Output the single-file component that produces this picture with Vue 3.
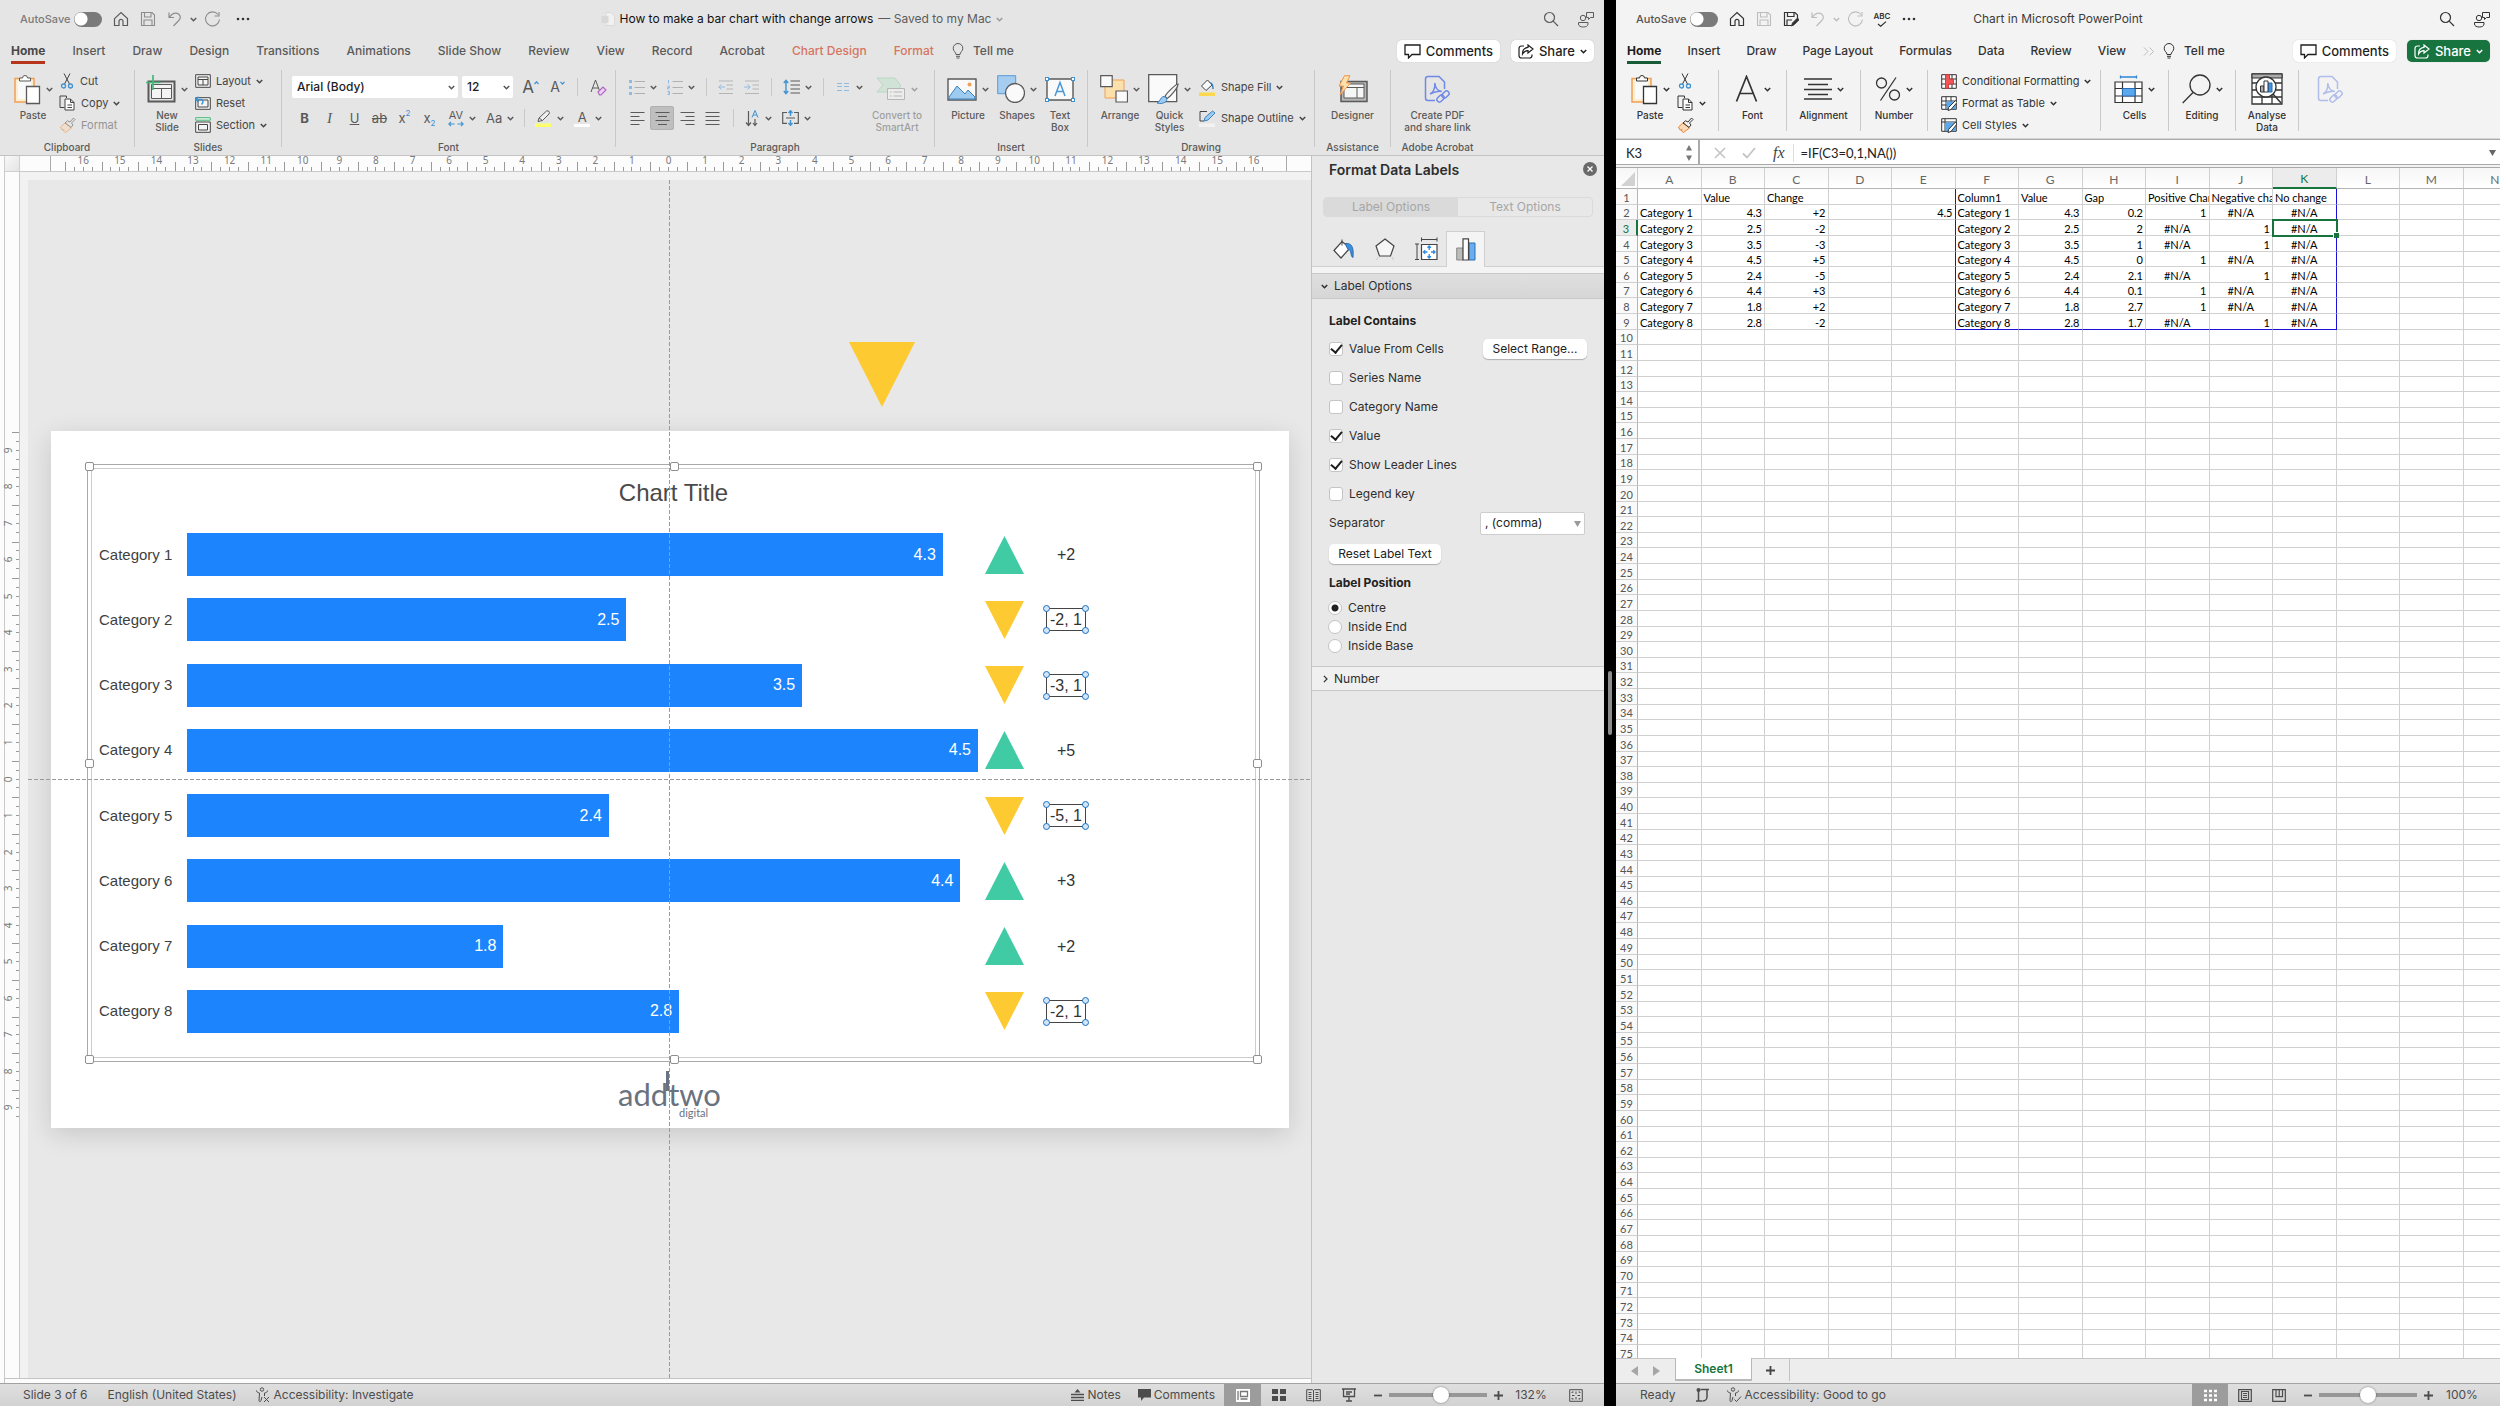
<script setup>
import { h, ref } from 'vue'

const icons = {
  chev: [7, 5, '<path d="M.8.9 3.5 3.7 6.2.9" stroke-width="1.5"/>'],
  chevR: [5, 8, '<path d="M.9.9 4 4 .9 7.1" stroke-width="1.2"/>'],
  home: [16, 16, '<path d="M1.500 7.600 8 1.500l6.500 6.100V14.500H10V10.400a2 2 0 0 0-4 0V14.500H1.500Z" stroke-width="1.2"/>'],
  save: [16, 16, '<path d="M1.500 1.500H12L14.500 4V14.500H1.500ZM4.500 1.500V6h6.500V1.500M4 14.500V9h8v5.500" stroke-width="1.1"/>'],
  saveAs: [16, 16, '<path d="M8 14.500H1.500V1.500H12L14.500 4V7M4.500 1.500V5.500H11V1.500M4 14.500V9h5" stroke-width="1.2"/><path d="m8.500 15 1-3 5-5 1.500 1.800-5 5Z" fill="currentColor"/>'],
  undo: [16, 16, '<path d="M2 1.500V6.500H7M2.300 6.300C5 2.500 9 .8 11.800 3.200c2.500 2.400 1.800 4.600-.5 6.800L6.500 15" stroke-width="1.200"/>'],
  redo: [17, 17, '<path d="M14 3.500A7 7 0 1 0 15.500 8.500M15 1V5h-4.500" stroke-width="1.100"/>'],
  dots: [14, 4, '<g fill="currentColor" stroke="none"><circle cx="2" cy="2" r="1.300"/><circle cx="7" cy="2" r="1.300"/><circle cx="12" cy="2" r="1.300"/></g>'],
  check: [10, 6, '<path d="M1 3 3.700 5.300 9 .6" stroke-width="1.200"/>'],
  ppt: [14, 14, '<path d="M5 .5h5L13.500 4v9.500H5Z" fill="#f1f1f1" stroke="#dadada"/><rect x=".5" y="4" width="7" height="7" fill="#d8d8d8" stroke="none"/>'],
  search: [16, 16, '<circle cx="6.500" cy="6.500" r="5" stroke-width="1.200"/><path d="m10.200 10.200 4.800 4.800" stroke-width="1.200"/>'],
  people: [17, 17, '<circle cx="6" cy="7" r="2.700"/><path d="M1.500 11.500h9.500v1.500c0 2-2 3-4.700 3s-4.800-1-4.800-3ZM9.500 1.500h7v5h-3l-2 2v-2h-2Z"/>'],
  bulb: [12, 16, '<path d="M4 11.500C4 9 1.200 8.500 1.200 5.300a4.800 4.800 0 0 1 9.600 0C10.800 8.500 8 9 8 11.500ZM4 13.300h4M4.500 15h3"/>'],
  comment: [17, 15, '<path d="M1 1h15v9.500H8L4.500 14v-3.500H1Z" stroke-width="1.300"/>'],
  share: [16, 15, '<path d="M6 2H3.500C2 2 1 3 1 4.500v7C1 13 2 14 3.500 14h8c1.500 0 2.500-1 2.500-2.500V10.500" stroke-width="1.200"/><path d="M10 1l5 4-5 4V6.700C7.500 6.700 6 7.500 4.500 10 4.500 6 6.500 3.700 10 3.400Z" stroke-width="1.200"/>'],
  paste: [28, 31, '<path d="M2 4.500h19V28H2Z" fill="#fdeecf" stroke="#f0a055" stroke-width="1.500"/><path d="M5 7h13v18H5Z" fill="#fafafa" stroke="none"/><path d="M6.500 7V4h3a2.500 2.500 0 0 1 5 0h3V7Z" fill="#fff"/><path d="M13.500 12.500h13v17h-13Z" fill="#fff" stroke-width="1.300"/>'],
  cut: [16, 16, '<path d="M5 .5l5.500 10.500M11 .5 5.500 11"/><g stroke="#3f93d2" stroke-width="1.300"><circle cx="4.500" cy="13" r="2"/><circle cx="11.500" cy="13" r="2"/></g>'],
  copy: [17, 16, '<path d="M5.500 12.500H1V1h6.500v2"/><path d="M6 4h5.500L15 7.500V15H6ZM11.500 4v3.500H15M8.500 10H13M8.500 12.500H13" fill="#fff"/>'],
  brush: [17, 16, '<path d="m1.500 10 5-4.500 6 5.500-6 4.500-2-1.500.5-1.500-2 .5Z" fill="#fbd9b5" stroke="#e8893c"/><path d="m6 6 2.500-2.200L11 5l3.500-4L16 2.500 12.500 6l1.500 2-2 2.500Z"/>'],
  newSlide: [30, 28, '<path d="M2.500 6.500h26v20h-26Z" stroke-width="2"/><path d="M5.500 9.500h20v14h-20ZM5.500 13.500h20M15.500 13.500v10" fill="#f4f4f4"/><path d="M7 0v15M0 7.500h14.500" stroke="#45b878" stroke-width="1.700"/>'],
  layout: [16, 14, '<path d="M.7.700h14.600v12.600H.7ZM3 3h10v8H3ZM3 5.500h10M8 5.500V11" fill="#f4f4f4"/>'],
  reset: [16, 14, '<path d="M.7 1.700h14.600v11.600H.7ZM3 4h10v7H3Z" fill="#f4f4f4"/><path d="M1 3.500h5.500c2 0 2 3 0 5M3.500.8.800 3.500l2.700 2.700" stroke="#3f93d2" stroke-width="1.500"/>'],
  section: [16, 16, '<path d="M.7.700h14.600v2.500H.7Z" stroke="#45b878" fill="#e7f6ed"/><path d="M.7 5h14.600v10.300H.7ZM3.500 7.500h9V13h-9Z" fill="#f4f4f4"/>'],
  caretUp: [5, 4, '<path d="M.5 3 2.500.8 4.500 3" stroke="#3f93d2" stroke-width="1.200"/>'],
  caretDn: [5, 4, '<path d="M.5.8 2.500 3 4.500.8" stroke="#3f93d2" stroke-width="1.200"/>'],
  eraser: [17, 17, '<path d="m1 13 4.500-12L10 13M2.500 9h6"/><path d="m8 13 5-5 3 3-5 5H9.500Z" fill="#ecd3f2" stroke="#b164c4" stroke-width="1.200"/>'],
  av: [16, 6, '<path d="M1 3h5.500M9.500 3H15M3 .8.900 3 3 5.200M13 .8 15.100 3 13 5.200" stroke="#3f93d2" stroke-width="1.200"/>'],
  pen: [17, 17, '<path d="M0 13.500h16v3.500H0Z" fill="#ffff6b" stroke="none"/><path d="m4 8 7.500-7c2.500-.5 3.500 1 2.500 3L7.500 10.500ZM4 8l-1 3.500 4.500-1" fill="#efefef"/>'],
  bullets: [16, 15, '<g stroke="#8fbbe0"><path d="M1.500 0v3M1.500 6v3M1.500 12v3" stroke-width="3"/></g><path d="M5.500 1.500H16M5.500 7.500H16M5.500 13.500H16" stroke="#b0b0b0"/>'],
  numbers: [16, 15, '<path d="M5.500 1.500H16M5.500 7.500H16M5.500 13.500H16" stroke="#b0b0b0"/><path d="M1.500 0v3.500M.5 6h2v1.500h-2v1.500h2M.5 11.500h2v3h-2M1 13h1.500" stroke="#8fbbe0"/>'],
  outdent: [16, 15, '<path d="M1 1h14M8.500 5H15M8.500 9H15M1 13.500h14" stroke="#b5b5b5"/><path d="M.8 7H7M3.500 4.500.8 7l2.700 2.500" stroke="#8fbbe0"/>'],
  indent: [16, 15, '<path d="M1 1h14M8.500 5H15M8.500 9H15M1 13.500h14" stroke="#b5b5b5"/><path d="M0 7h6M3.500 4.500 6.200 7 3.500 9.500" stroke="#8fbbe0"/>'],
  spacing: [17, 16, '<path d="M3 1.500v13M.8 4 3 1.300 5.200 4M.8 12 3 14.700 5.200 12" stroke="#3f93d2" stroke-width="1.400"/><path d="M7.500 2H17M7.500 6H17M7.500 10H17M7.500 14H17" stroke-width="1.200"/>'],
  columns: [16, 10, '<path d="M2 1.500h5M2 4.500h5M2 8.500h5M9 1.500h5M9 4.500h5M9 8.500h5" stroke="#8fbbe0"/>'],
  smart: [30, 24, '<path d="M1 1h18l6 8-6 6H1l6-7Z" fill="#bfe3c9" stroke="#93cca3"/><path d="M11.500 11.500h17v11h-17ZM14 15h1.500M17.500 15H26M14 19h1.500M17.500 19H26" fill="#f4f4f4" stroke="#888"/>'],
  left: [15, 15, '<path d="M.5 1.500h14M.5 5.500h9M.5 9.500h14M.5 13.500h9"/>'],
  center: [15, 15, '<path d="M.5 1.500h14M3 5.500h9M.5 9.500h14M3 13.500h9"/>'],
  right: [15, 15, '<path d="M.5 1.500h14M5.500 5.500h9M.5 9.500h14M5.500 13.500h9"/>'],
  justify: [15, 15, '<path d="M.5 1.500h14M.5 5.500h14M.5 9.500h14M.5 13.500h14"/>'],
  textDir: [16, 17, '<path d="M4.500 1v14M2 12.500 4.500 15.500 7 12.500M11 9v6M9 13l2 2.500 2-2.500" stroke-width="1.200"/><path d="m8 7.500 3-7 3 7M9 5h4" stroke="#3f93d2"/>'],
  alignText: [17, 16, '<path d="M5 2.500H.7v10.800H5M12 2.500h4.300v10.800H12M4 8h9" stroke-width="1.200"/><path d="M8.500 1v5M8.500 10v5M6.500 3l2-2.300 2 2.300M6.500 13l2 2.300 2-2.300" stroke="#3f93d2" stroke-width="1.400"/>'],
  picture: [30, 23, '<path d="M1 1h28v21H1Z" fill="#fafafa" stroke-width="1.400"/><path d="m2 19 8-11 8 8 3-4 7 7v2H2Z" fill="#9ecbf0" stroke="#3b83bf"/><circle cx="22.500" cy="6.500" r="2" fill="#f0a055" stroke="none"/>'],
  shapes: [28, 28, '<path d="M.7.700h18v18h-18Z" fill="#a4cdf0" stroke="#5a9bd4"/><circle cx="18" cy="18" r="9.500" fill="#fafafa" stroke-width="1.300"/>'],
  textBox: [30, 25, '<path d="M2 2h26v21H2Z" fill="#fafafa" stroke-width="1.400"/><path d="m10 19 5-13.500L20 19M11.800 14.500h6.500" stroke="#4a98d8" stroke-width="1.500"/><g fill="#fff" stroke="#3f93d2"><rect x=".5" y=".5" width="3" height="3"/><rect x="26.500" y=".5" width="3" height="3"/><rect x=".5" y="21.500" width="3" height="3"/><rect x="26.500" y="21.500" width="3" height="3"/></g>'],
  arrange: [28, 28, '<path d="M5 5h19v18H5Z" fill="#fbe0ac" stroke="#f0a055"/><path d="M.7.700h11.500v11H.7ZM16 16h11.500v11H16Z" fill="#fafafa" stroke-width="1.200"/>'],
  quick: [31, 30, '<path d="M.7.700h28v27H.7Z" fill="#fafafa" stroke-width="1.300"/><path d="M30 10c-2 0-12 9.500-13 12.500l2 2C22 23 30 14 30 10Z" fill="#f6f6f6" stroke-width="1.200"/><path d="M9 29c3-1 3-5 6-6.500 3 0 5 3 3 5s-6 2.500-9 1.500Z" fill="#9ecbf0" stroke="#3b83bf"/>'],
  fill: [17, 17, '<path d="M0 13.500h16v3.500H0Z" fill="#fcd84f" stroke="none"/><path d="m2.500 7 6-6L13 6l-6 5.500Z" fill="#f8f8f8"/><path d="M11 4c3 0 3 3 3 6" stroke="#3b83bf" stroke-width="1.500"/>'],
  outline: [17, 17, '<path d="M0 13.500h16v3.500H0Z" fill="#f2f2f2" stroke="none"/><path d="M8 1.500H1V11h4"/><path d="m5 11 1-3.500L13.500 1l2.500 2-7 7Z" fill="#9ecbf0" stroke="#3b83bf"/>'],
  designer: [31, 28, '<path d="M4 6.500h26v20H4Z" fill="#b5b5b5" stroke-width="1.500"/><path d="M7 9h20v14H7ZM7 12.500h20M20 12.500V23" fill="#f6f6f6"/><path d="M7.500.7 2 11h4.500L3 20 13.500 8H9.500L13 .7Z" fill="#fbe0ac" stroke="#f0954a"/>'],
  pdf: [27, 29, '<path d="M11 25.500H4C2.500 25.500 1.500 24.500 1.500 23V4C1.500 2.500 2.500 1.500 4 1.500h11l5.500 5.500v7M6 19c4-2 5-7 4.800-11 .5 5 3 8 7 8.500-4-.5-8 .5-11.800 2.500" stroke="#7089e8" stroke-width="1.500"/><g stroke="#7089e8" stroke-width="1.500"><rect x="12.500" y="21" width="8" height="5" rx="2.500" transform="rotate(-45 16.500 23.500)"/><rect x="17.500" y="17" width="8" height="5" rx="2.500" transform="rotate(-45 21.500 19.500)"/></g>'],
  bucket: [24, 24, '<path d="M2 13.500 10 4.500l8 6.500-9 10Z" fill="#fff" stroke-width="1.200"/><path d="M10 8.500V2.500"/><path d="M13 6.500c6-.5 9 2 8 14-3-1-1-8-5-8Z" fill="#3f8edb" stroke="#2d6fb4"/>'],
  pentagon: [22, 24, '<path d="M11 2 20 9l-3.500 10h-11L2 9Z" fill="#f6f6f6" stroke-width="1.200"/><path d="m4 20-1.500 3M18 20l1.500 3" stroke="#c9c9c9"/>'],
  size: [24, 24, '<path d="M7.500 7.500h15.500v15H7.500Z" fill="#fff" stroke-width="1.200"/><path d="M7.500 2.500H23M7.500.5v4M23 .5v4M3 7v15.500M1 7h4M1 22.500h4"/><g stroke="#2f8ce0" stroke-width="1.300"><path d="M15.200 9v4M15.200 17v4M9.500 15h4M17 15h4M13.500 10.700 15.200 9l1.700 1.700M13.500 19.300 15.200 21l1.700-1.700M11.200 13.300 9.500 15l1.700 1.700M19.300 13.300 21 15l-1.700 1.700"/></g>'],
  bars: [20, 23, '<path d="M.7 10h6.500v12H.7Z" fill="#bcbcb8" stroke="#8a8a8a"/><path d="M13 5h6v17h-6Z" fill="#69aef0" stroke="#2d6fb4"/><path d="M7 .8h5.500V22H7Z" fill="#fff" stroke-width="1.200"/>'],
  close: [14, 14, '<circle cx="7" cy="7" r="7" fill="#696969" stroke="none"/><path d="m4.500 4.500 5 5M9.500 4.500l-5 5" stroke="#fff" stroke-width="1.300"/>'],
  access: [16, 16, '<circle cx="7" cy="2.500" r="1.700"/><path d="M1.500 3.500c0 1.500 1 2 3 2.500L4 13.500c0 1.500 1.500 1.500 2 0L7 10M12.500 3.500c0 1.500-1 2-3 2.500v3M9 10l5 5M14 10l-5 5"/>'],
  accessOk: [16, 16, '<circle cx="7" cy="2.500" r="1.700"/><path d="M1.500 3.500c0 1.500 1 2 3 2.500L4 13.500c0 1.500 1.500 1.500 2 0L7 10M12.500 3.500c0 1.500-1 2-3 2.500v3M8.500 12.500l2 2 4.500-5"/>'],
  notes: [13, 12, '<path d="M0 5.500h13M0 8.500h13M0 11.500h13" stroke-width="1.300"/><path d="m3.500 3.500 3-3.500 3 3.500Z" fill="currentColor" stroke="none"/>'],
  talk: [13, 12, '<path d="M0 0h13v8.500H6L3 12V8.500H0Z" fill="currentColor" stroke="none"/>'],
  normal: [14, 13, '<path d="M0 0h14v13H0Z" fill="#fff" stroke="none"/><path d="M4.500 2.500h7v5h-7ZM4.500 10h7M2 2v9" stroke="#777" stroke-width="1.300"/>'],
  sorter: [14, 12, '<path d="M0 0h6v5H0ZM8 0h6v5H8ZM0 7h6v5H0ZM8 7h6v5H8Z" fill="currentColor" stroke="none"/>'],
  reading: [15, 13, '<path d="M7.500 1.500v11M.7.700h5.800l1 1 1-1h5.800v11H8.500l-1 1-1-1H.7ZM2.500 3.500h3M2.500 5.500h3M2.500 7.500h3M2.500 9.500h3M9.500 3.500h3M9.500 5.500h3M9.500 7.500h3M9.500 9.500h3"/>'],
  show: [14, 14, '<path d="M0 1h14M1.500 1v7.500h11V1M4 4h6M4 6h4M7 9v3.500M4 13h6" stroke-width="1.300"/>'],
  fit: [14, 13, '<path d="M.7.700h12.600v11.600H.7ZM7 2.500v2.500M7 8v2.500M3 6.500h2.500M8.500 6.500H11M3 4V3h1.500M9.500 3H11v1M3 9v1h1.500M9.500 10H11V9"/>'],
  grid: [13, 13, '<g stroke="#fff" stroke-width="2.500"><path d="M0 2h3M5 2h3M10 2h3M0 6.500h3M5 6.500h3M10 6.500h3M0 11h3M5 11h3M10 11h3"/></g>'],
  page: [14, 13, '<path d="M.7.700h12.600v11.600H.7ZM3.500 2.500h7v8h-7ZM5 4.500h4M5 6.500h4M5 8.500h4" stroke-width="1.200"/>'],
  breaks: [14, 13, '<path d="M.7.700h12.600v11.600H.7ZM4 .7v7h6.500v-7M7.200.7v7" stroke-width="1.200"/>'],
  macro: [15, 14, '<path d="M3.500 3v9.500M1 13h6M5.500 1.500H14M12 1.500V9c0 3-3 4-4.500 4" stroke-width="1.500"/><circle cx="3.500" cy="2" r="2" fill="currentColor" stroke="none"/>'],
  bigA: [24, 28, '<path d="m1.500 26.500 10-25 10 25M5 18.500h13.500" stroke-width="1.700"/>'],
  bigAlign: [28, 24, '<path d="M0 2h28M4 7.500h20M0 12.500h28M4 17.500h20M0 22h28" stroke-width="1.300"/>'],
  percent: [26, 26, '<circle cx="6.500" cy="7" r="5" stroke-width="1.300"/><circle cx="19.500" cy="19" r="5" stroke-width="1.300"/><path d="M21 1.500 5.500 24.500" stroke-width="1.300"/>'],
  condFmt: [16, 15, '<path d="M.7.700h14.600v13.600H.7ZM.7 5h14.600M.7 10h14.600M5 .7v13.600M11 .7v13.600" fill="#fff"/><path d="M4.500.7h4v4.500h4V10h-5v4.300h-3Z" fill="#f25555" stroke="#d83b3b"/>'],
  fmtTable: [16, 15, '<path d="M.7.700h14.600v12.600H.7ZM.7 5h14.600M5 .7v12.600M10 .7v12.600M.7 9h14.600" fill="#fff"/><path d="M5.500 5.500h9.500v7.500H5.500Z" fill="#5aa9ee" stroke="none"/><path d="m14.500 4.500-7 7-.5 3 3-1 6-7Z" fill="#fff"/>'],
  cellSt: [16, 15, '<path d="M.7.700h14.600v12.600H.7ZM.7 4h14.600M4 .7v12.600" fill="#fff"/><path d="M4.500 4.500h10.500v8.500H4.500Z" fill="#5aa9ee" stroke="none"/><path d="m14.500 4-7 7.500-.5 3 3-1 6-7.500Z" fill="#fff"/>'],
  cells: [29, 29, '<path d="M6.500 2h16M6.500.5v3M22.500.5v3" stroke="#2f86d6" stroke-width="1.300"/><path d="M1 7h27v20.500H1ZM1 13.500h27M1 21h27M8.500 7v20.500M21 7v20.500" fill="#fff" stroke-width="1.200"/><path d="M8.500 13.500H21V21H8.500Z" fill="#5aa9ee" stroke="#2a6db0"/>'],
  lens: [29, 30, '<circle cx="18" cy="11" r="10" stroke-width="1.300"/><path d="M11 18.500.7 29" stroke-width="1.300"/>'],
  analyse: [32, 32, '<path d="M1 1h30v30H1ZM1 10h30M1 17h30M1 24h30M11 6v25M21 6v25" fill="#fff" stroke-width="1.300"/><path d="M1 1h30v4H1Z" fill="#aaa"/><circle cx="15" cy="14" r="10" fill="#fff" stroke-width="1.300"/><path d="M9.500 13h3.500v6H9.500Z" fill="#b0b0b0"/><path d="M17 10h4v9h-4Z" fill="#3f93e0" stroke="#2a6db0"/><path d="M13 8h4v11h-4Z" fill="#fff"/><path d="m22 21 8 9" stroke-width="1.500"/>'],
  updown: [6, 16, '<path d="M0 5.500 3 0l3 5.500ZM0 10.500 3 16l3-5.500Z" fill="#777" stroke="none"/>'],
  xMark: [12, 12, '<path d="m1 1 10 10M11 1 1 11" stroke-width="1.600"/>'],
  tick: [14, 12, '<path d="m1 6.500 4 4L13 1" stroke-width="1.800"/>'],
  down: [7, 6, '<path d="M0 0h7L3.500 6Z" fill="currentColor" stroke="none"/>'],
  triL: [7, 10, '<path d="M7 0v10L0 5Z" fill="currentColor" stroke="none"/>'],
  triR: [7, 10, '<path d="M0 0v10l7-5Z" fill="currentColor" stroke="none"/>'],
  plus: [9, 9, '<path d="M4.500 0v9M0 4.500h9" stroke-width="1.800"/>'],
  minus: [8, 9, '<path d="M0 4.500h8" stroke-width="1.800"/>'],
  more: [12, 9, '<path d="m1 .5 4 4-4 4M6.500.5l4 4-4 4"/>'],
  corner: [14, 14, '<path d="M14 0v14H0Z" fill="#d2d2d2" stroke="none"/>'],
  up: [39, 38, '<path d="M19.500 0 39 38H0Z" fill="#40cba5" stroke="none"/>'],
  dn: [39, 38, '<path d="M0 0h39L19.500 38Z" fill="#fdca31" stroke="none"/>']
}
const Icon = (p) => {
  const [w, ht, inner] = icons[p.n]
  return h('svg', { width: w, height: ht, viewBox: `0 0 ${w} ${ht}`, fill: 'none', stroke: 'currentColor', 'aria-hidden': 'true', innerHTML: inner })
}
Icon.props = ['n']

const tabs = ['Home', 'Insert', 'Draw', 'Design', 'Transitions', 'Animations', 'Slide Show', 'Review', 'View', 'Record', 'Acrobat', 'Chart Design', 'Format']
const xlTabs = ['Home', 'Insert', 'Draw', 'Page Layout', 'Formulas', 'Data', 'Review', 'View']
const hTicks = Array.from({ length: 33 }, (_, i) => Math.abs(i - 16))
const vTicks = Array.from({ length: 19 }, (_, i) => Math.abs(i - 9))

const rows = [
  ['Category 1', 4.3, 2], ['Category 2', 2.5, -2], ['Category 3', 3.5, -3], ['Category 4', 4.5, 5],
  ['Category 5', 2.4, -5], ['Category 6', 4.4, 3], ['Category 7', 1.8, 2], ['Category 8', 2.8, -2]
].map(([name, value, change]) => ({ name, value, change }))
const gaps = ['0.2', '2', '1', '0', '2.1', '0.1', '2.7', '1.7']
const sign = (n) => (n > 0 ? '+' + n : String(n))

const checks = ref([
  { t: 'Value From Cells', on: true }, { t: 'Series Name', on: false }, { t: 'Category Name', on: false },
  { t: 'Value', on: true }, { t: 'Show Leader Lines', on: true }, { t: 'Legend key', on: false }
])
const place = ref('Centre')
const zoomL = ref(54)
const zoomR = ref(50)

const cols = 'ABCDEFGHIJKLMN'.split('')
const head = { B: 'Value', C: 'Change', F: 'Column1', G: 'Value', H: 'Gap', I: 'Positive Change', J: 'Negative change', K: 'No change' }
function cell(c, r) {
  if (r === 1) return head[c] || ''
  const d = rows[r - 2]
  if (!d) return ''
  const up = d.change > 0
  return { A: d.name, B: d.value, C: sign(d.change), E: r === 2 ? '4.5' : '', F: d.name, G: d.value, H: gaps[r - 2], I: up ? '1' : '#N/A', J: up ? '#N/A' : '1', K: '#N/A' }[c] ?? ''
}
function cls(c, r) {
  const v = String(cell(c, r))
  return {
    num: r > 1 && /^[+-]?[\d.]+$/.test(v),
    na: v === '#N/A',
    eEdge: c === 'E' && r < 10,
    kEdge: c === 'K' && r < 10,
    bEdge: r === 9 && c >= 'F' && c <= 'K',
    active: c === 'K' && r === 3
  }
}
</script>

<template>
  <div class="screen">
    <section class="app ppt">
      <header class="titlebar">
        <div class="quick">
          <label class="auto">AutoSave<input type="checkbox" role="switch" class="switch"></label>
          <button aria-label="Home"><Icon n="home" /></button>
          <button aria-label="Save" class="dim"><Icon n="save" /></button>
          <button aria-label="Undo" class="dim"><Icon n="undo" /></button>
          <button aria-label="Undo list" class="tight"><Icon n="chev" /></button>
          <button aria-label="Redo" class="dim"><Icon n="redo" /></button>
          <button aria-label="More" class="dark"><Icon n="dots" /></button>
        </div>
        <div class="doc"><Icon n="ppt" /><b>How to make a bar chart with change arrows</b><span>— Saved to my Mac</span><Icon n="chev" class="pale" /></div>
        <div class="tools-r"><button aria-label="Search"><Icon n="search" /></button><button aria-label="Account"><Icon n="people" /></button></div>
      </header>
      <nav class="tabs">
        <button v-for="t in tabs" :key="t" :class="{ on: t === 'Home', ctx: t === 'Chart Design' || t === 'Format' }">{{ t }}</button>
        <button class="tell"><Icon n="bulb" />Tell me</button>
        <div class="acts">
          <button class="pill"><Icon n="comment" />Comments</button>
          <button class="pill"><Icon n="share" />Share<Icon n="chev" /></button>
        </div>
      </nav>

      <div class="ribbon">
        <div class="group g-clip">
          <div class="tools">
            <button class="big"><span><Icon n="paste" /><Icon n="chev" /></span>Paste</button>
            <div class="stack">
              <button><Icon n="cut" />Cut</button>
              <button><Icon n="copy" />Copy<Icon n="chev" /></button>
              <button class="off"><Icon n="brush" />Format</button>
            </div>
          </div>
          <div class="cap">Clipboard</div>
        </div>
        <i class="sep"></i>
        <div class="group g-slides">
          <div class="tools">
            <button class="big"><span><Icon n="newSlide" /><Icon n="chev" /></span>New<br>Slide</button>
            <div class="stack">
              <button><Icon n="layout" />Layout<Icon n="chev" /></button>
              <button><Icon n="reset" />Reset</button>
              <button><Icon n="section" />Section<Icon n="chev" /></button>
            </div>
          </div>
          <div class="cap">Slides</div>
        </div>
        <i class="sep"></i>
        <div class="group g-font">
          <div class="two">
            <div class="line">
              <label class="pick face"><select aria-label="Font"><option>Arial (Body)</option></select><Icon n="chev" /></label>
              <label class="pick pt"><select aria-label="Font size"><option>12</option></select><Icon n="chev" /></label>
              <button class="glyph lg" aria-label="Grow font">A<Icon n="caretUp" /></button>
              <button class="glyph" aria-label="Shrink font">A<Icon n="caretDn" /></button>
              <i class="bar"></i>
              <button aria-label="Clear formatting"><Icon n="eraser" /></button>
            </div>
            <div class="line">
              <button class="sq"><b>B</b></button><button class="sq serif"><i>I</i></button><button class="sq"><u>U</u></button>
              <button class="sq small"><s>ab</s></button><button class="sq small">x<sup>2</sup></button><button class="sq small">x<sub>2</sub></button>
              <div class="sub">
                <button class="dd av"><span>AV<Icon n="av" /></span><Icon n="chev" /></button>
                <button class="dd">Aa<Icon n="chev" /></button>
                <i class="bar"></i>
                <button class="dd" aria-label="Highlight"><Icon n="pen" /><Icon n="chev" /></button>
                <button class="dd"><span class="ink">A</span><Icon n="chev" /></button>
              </div>
            </div>
          </div>
          <div class="cap">Font</div>
        </div>
        <i class="sep"></i>
        <div class="group g-para">
          <div class="tools">
            <div class="two">
              <div class="line wide">
                <button class="dd" aria-label="Bullets"><Icon n="bullets" /><Icon n="chev" /></button>
                <button class="dd" aria-label="Numbering"><Icon n="numbers" /><Icon n="chev" /></button>
                <i class="bar"></i>
                <button aria-label="Outdent"><Icon n="outdent" /></button>
                <button aria-label="Indent"><Icon n="indent" /></button>
                <i class="bar"></i>
                <button class="dd" aria-label="Line spacing"><Icon n="spacing" /><Icon n="chev" /></button>
                <i class="bar"></i>
                <button class="dd" aria-label="Columns"><Icon n="columns" /><Icon n="chev" /></button>
              </div>
              <div class="line">
                <div class="aligns">
                  <button v-for="a in ['left', 'center', 'right', 'justify']" :key="a" :aria-label="a" :class="{ on: a === 'center' }"><Icon :n="a" /></button>
                </div>
                <div class="sub">
                  <i class="bar"></i>
                  <button class="dd" aria-label="Text direction"><Icon n="textDir" /><Icon n="chev" /></button>
                  <button class="dd" aria-label="Align text"><Icon n="alignText" /><Icon n="chev" /></button>
                </div>
              </div>
            </div>
            <button class="big off2"><span><Icon n="smart" /><Icon n="chev" /></span>Convert to<br>SmartArt</button>
          </div>
          <div class="cap">Paragraph</div>
        </div>
        <i class="sep"></i>
        <div class="group g-insert">
          <div class="tools">
            <button class="big"><span><Icon n="picture" /><Icon n="chev" /></span>Picture</button>
            <button class="big"><span><Icon n="shapes" /><Icon n="chev" /></span>Shapes</button>
            <button class="big"><span><Icon n="textBox" /></span>Text<br>Box</button>
          </div>
          <div class="cap">Insert</div>
        </div>
        <i class="sep"></i>
        <div class="group g-draw">
          <div class="tools">
            <button class="big"><span><Icon n="arrange" /><Icon n="chev" /></span>Arrange</button>
            <button class="big"><span><Icon n="quick" /><Icon n="chev" /></span>Quick<br>Styles</button>
            <div class="stack duo">
              <button><Icon n="fill" />Shape Fill<Icon n="chev" /></button>
              <button><Icon n="outline" />Shape Outline<Icon n="chev" /></button>
            </div>
          </div>
          <div class="cap">Drawing</div>
        </div>
        <i class="sep"></i>
        <div class="group g-assist">
          <div class="tools mid"><button class="big"><span><Icon n="designer" /></span>Designer</button></div>
          <div class="cap">Assistance</div>
        </div>
        <i class="sep"></i>
        <div class="group g-adobe">
          <div class="tools mid"><button class="big"><span><Icon n="pdf" /></span>Create PDF<br>and share link</button></div>
          <div class="cap">Adobe Acrobat</div>
        </div>
      </div>

      <div class="work">
        <div class="editor">
          <div class="knob"></div>
          <div class="hruler"><span v-for="(n, i) in hTicks" :key="i">{{ n }}</span></div>
          <div class="vruler"><span v-for="(n, i) in vTicks" :key="i"><em>{{ n }}</em></span></div>
          <div class="canvas">
            <svg class="spare" width="66" height="65" viewBox="0 0 66 65" aria-hidden="true"><path d="M0 0h66L33 65Z" fill="#fdca31" /></svg>
            <article class="slide">
              <div class="frame">
                <div class="chart">
                  <h2>Chart Title</h2>
                  <div class="plot">
                    <div v-for="r in rows" :key="r.name" class="item">
                      <span class="name">{{ r.name }}</span>
                      <div class="track"><div class="fillbar" :style="{ width: (r.value / 4.5) * 100 + '%' }">{{ r.value }}</div></div>
                      <Icon :n="r.change > 0 ? 'up' : 'dn'" />
                      <span v-if="r.change > 0" class="delta">{{ sign(r.change) }}</span>
                      <span v-else class="delta picked">{{ r.change }}, 1<i></i><i></i><i></i><i></i></span>
                    </div>
                  </div>
                </div>
                <i v-for="k in 8" :key="k" class="grip" :class="'k' + k"></i>
              </div>
              <div class="logo"><span>addtwo</span><small>digital</small><i></i></div>
            </article>
            <i class="guide v"></i><i class="guide h"></i>
          </div>
          <div class="foot"></div>
        </div>

        <aside class="pane">
          <div class="pane-h"><h3>Format Data Labels</h3><button aria-label="Close"><Icon n="close" /></button></div>
          <div class="seg"><button class="on">Label Options</button><button>Text Options</button></div>
          <div class="kinds">
            <button aria-label="Fill"><Icon n="bucket" /></button>
            <button aria-label="Effects"><Icon n="pentagon" /></button>
            <button aria-label="Size"><Icon n="size" /></button>
            <button aria-label="Label options" class="on"><Icon n="bars" /></button>
          </div>
          <button class="sect open"><Icon n="chev" />Label Options</button>
          <div class="form">
            <h4>Label Contains</h4>
            <div v-for="(c, i) in checks" :key="c.t" class="opt">
              <label><input v-model="c.on" type="checkbox">{{ c.t }}</label>
              <button v-if="i === 0" class="btn range">Select Range...</button>
            </div>
            <div class="sepr">
              <label for="sepsel">Separator</label>
              <div class="combo"><select id="sepsel"><option>, (comma)</option></select><Icon n="down" /></div>
            </div>
            <button class="btn reset">Reset Label Text</button>
            <h4 class="pos">Label Position</h4>
            <label v-for="p in ['Centre', 'Inside End', 'Inside Base']" :key="p" class="rad"><input v-model="place" type="radio" name="place" :value="p">{{ p }}</label>
          </div>
          <button class="sect shut"><Icon n="chevR" />Number</button>
        </aside>
      </div>

      <footer class="status">
        <span class="s1">Slide 3 of 6</span><span class="s2">English (United States)</span>
        <button class="s3"><Icon n="access" />Accessibility: Investigate</button>
        <div class="end">
          <button class="nt"><Icon n="notes" />Notes</button>
          <button class="cm"><Icon n="talk" />Comments</button>
          <button class="view on" aria-label="Normal"><Icon n="normal" /></button>
          <button class="view" aria-label="Slide sorter"><Icon n="sorter" /></button>
          <button class="view" aria-label="Reading"><Icon n="reading" /></button>
          <button class="view" aria-label="Slide show"><Icon n="show" /></button>
          <button class="zb" aria-label="Zoom out"><Icon n="minus" /></button>
          <input v-model="zoomL" type="range" aria-label="Zoom">
          <button class="zb" aria-label="Zoom in"><Icon n="plus" /></button>
          <span class="pc">132%</span>
          <button class="fit" aria-label="Fit"><Icon n="fit" /></button>
        </div>
      </footer>
    </section>

    <div class="split"><i></i></div>

    <section class="app xl">
      <header class="titlebar">
        <div class="quick">
          <label class="auto">AutoSave<input type="checkbox" role="switch" class="switch"></label>
          <button aria-label="Home"><Icon n="home" /></button>
          <button aria-label="Save" class="faint"><Icon n="save" /></button>
          <button aria-label="Save as"><Icon n="saveAs" /></button>
          <button aria-label="Undo" class="faint"><Icon n="undo" /></button>
          <button aria-label="Undo list" class="tight faint"><Icon n="chev" /></button>
          <button aria-label="Redo" class="faint"><Icon n="redo" /></button>
          <button class="abc"><span>ABC</span><Icon n="check" /></button>
          <button aria-label="More" class="dark"><Icon n="dots" /></button>
        </div>
        <div class="doc"><span class="plain">Chart in Microsoft PowerPoint</span></div>
        <div class="tools-r"><button aria-label="Search"><Icon n="search" /></button><button aria-label="Account"><Icon n="people" /></button></div>
      </header>
      <nav class="tabs">
        <button v-for="t in xlTabs" :key="t" :class="{ on: t === 'Home' }">{{ t }}</button>
        <button class="over" aria-label="More tabs"><Icon n="more" /></button>
        <button class="tell"><Icon n="bulb" />Tell me</button>
        <div class="acts">
          <button class="pill"><Icon n="comment" />Comments</button>
          <button class="pill green"><Icon n="share" />Share<Icon n="chev" /></button>
        </div>
      </nav>
      <div class="ribbon">
        <div class="group x-paste">
          <div class="tools">
            <button class="big"><span><Icon n="paste" /><Icon n="chev" /></span>Paste</button>
            <div class="stack">
              <button aria-label="Cut"><Icon n="cut" /></button>
              <button aria-label="Copy"><Icon n="copy" /><Icon n="chev" /></button>
              <button aria-label="Format painter"><Icon n="brush" /></button>
            </div>
          </div>
        </div>
        <i class="sep"></i>
        <div class="group x-font"><button class="big"><span><Icon n="bigA" /><Icon n="chev" /></span>Font</button></div>
        <i class="sep"></i>
        <div class="group x-align"><button class="big"><span><Icon n="bigAlign" /><Icon n="chev" /></span>Alignment</button></div>
        <i class="sep"></i>
        <div class="group x-num"><button class="big"><span><Icon n="percent" /><Icon n="chev" /></span>Number</button></div>
        <i class="sep"></i>
        <div class="group x-styles">
          <div class="stack">
            <button><Icon n="condFmt" />Conditional Formatting<Icon n="chev" /></button>
            <button><Icon n="fmtTable" />Format as Table<Icon n="chev" /></button>
            <button><Icon n="cellSt" />Cell Styles<Icon n="chev" /></button>
          </div>
        </div>
        <i class="sep"></i>
        <div class="group x-cells"><button class="big"><span><Icon n="cells" /><Icon n="chev" /></span>Cells</button></div>
        <i class="sep"></i>
        <div class="group x-edit"><button class="big"><span><Icon n="lens" /><Icon n="chev" /></span>Editing</button></div>
        <i class="sep"></i>
        <div class="group x-data"><button class="big"><span><Icon n="analyse" /></span>Analyse<br>Data</button></div>
        <i class="sep"></i>
        <div class="group x-pdf"><button class="big" aria-label="Create PDF"><span><Icon n="pdf" /></span></button></div>
      </div>
      <div class="fbar">
        <label class="namebox"><input value="K3" aria-label="Name box"><Icon n="updown" /></label>
        <button aria-label="Cancel" class="fx1"><Icon n="xMark" /></button>
        <button aria-label="Enter" class="fx1"><Icon n="tick" /></button>
        <button class="fx">fx</button>
        <input class="formula" value="=IF(C3=0,1,NA())" aria-label="Formula">
        <button aria-label="Expand" class="exp"><Icon n="down" /></button>
      </div>
      <div class="sheet">
        <table>
          <colgroup><col class="c0"><col v-for="c in cols" :key="c"></colgroup>
          <thead><tr><th><Icon n="corner" /></th><th v-for="c in cols" :key="c" :class="{ sel: c === 'K' }">{{ c }}</th></tr></thead>
          <tbody>
            <tr v-for="r in 75" :key="r">
              <th :class="{ sel: r === 3 }">{{ r }}</th>
              <td v-for="c in cols" :key="c" :class="cls(c, r)"><div>{{ cell(c, r) }}</div></td>
            </tr>
          </tbody>
        </table>
      </div>
      <div class="sheets">
        <button aria-label="Previous sheet" class="ar"><Icon n="triL" /></button>
        <button aria-label="Next sheet" class="ar"><Icon n="triR" /></button>
        <button class="tab">Sheet1</button>
        <button aria-label="Add sheet" class="add"><Icon n="plus" /></button>
      </div>
      <footer class="status">
        <span class="r1">Ready</span>
        <button class="r2" aria-label="Record macro"><Icon n="macro" /></button>
        <button class="s3"><Icon n="accessOk" />Accessibility: Good to go</button>
        <div class="end">
          <button class="view on" aria-label="Normal"><Icon n="grid" /></button>
          <button class="view" aria-label="Page layout"><Icon n="page" /></button>
          <button class="view" aria-label="Page breaks"><Icon n="breaks" /></button>
          <button class="zb" aria-label="Zoom out"><Icon n="minus" /></button>
          <input v-model="zoomR" type="range" aria-label="Zoom">
          <button class="zb" aria-label="Zoom in"><Icon n="plus" /></button>
          <span class="pc">100%</span>
        </div>
      </footer>
    </section>
  </div>
</template>

<style>
html, body { margin: 0; background: #000; }
</style>

<style scoped>
.screen { display: grid; grid-template-columns: 1604fr 12px 884fr; height: 100vh; font: 11px/12px Inter, "Liberation Sans", sans-serif; color: #5a5a5a; }
.screen * { box-sizing: border-box; }
button, input, select { font: inherit; color: inherit; background: none; border: 0; padding: 0; margin: 0; }
button { display: flex; align-items: center; justify-content: center; white-space: nowrap; }
svg { flex: none; display: block; }
h2, h3, h4 { margin: 0; }
.app { display: flex; flex-direction: column; min-width: 0; overflow: hidden; }
.ppt { background: #e5e5e5; }
.xl { background: #f3f3f3; color: #333; }
.split { background: #000; display: flex; align-items: center; justify-content: center; }
.split i { width: 4px; height: 64px; border-radius: 2px; background: #8c8c8c; }

/* title bar and tabs */
.titlebar { display: grid; grid-template-columns: 1fr auto 1fr; align-items: center; height: 38px; flex: none; }
.quick { display: flex; align-items: center; gap: 11px; padding-left: 20px; }
.auto { display: flex; align-items: center; gap: 4px; color: #7b7b7b; font-weight: 500; }
.switch { appearance: none; width: 28px; height: 15px; border-radius: 8px; background: radial-gradient(circle at 7px 7px, #fff 6px, transparent 7px), #7a7a7a; }
.dim { color: #8d8d8d; }
.faint { color: #bdbdbd; }
.dark { color: #333; margin-left: 4px; }
.tight { margin: 0 -4px; }
.abc { flex-direction: column; font-size: 8px; line-height: 9px; font-weight: 600; margin-left: -2px; }
.doc { display: flex; align-items: center; gap: 5px; font-size: 12px; color: #5c5c5c; white-space: nowrap; }
.doc b { font-weight: 400; color: #111; }
.plain { color: #3c3c3c; }
.pale { color: #999; }
.tools-r { display: flex; justify-content: flex-end; gap: 18px; padding-right: 10px; }
.tabs { display: flex; align-items: center; gap: 27px; height: 32px; flex: none; padding: 0 10px 6px 11px; font-size: 12px; font-weight: 500; }
.xl .tabs { gap: 26px; }
.tabs > button { height: 26px; border-bottom: 3px solid transparent; border-top: 3px solid transparent; }
.tabs > .on { font-weight: 700; color: #494949; border-bottom-color: #b7351a; }
.xl .tabs > .on { color: #1d1d1d; border-bottom-color: #185c37; }
.tabs > .ctx { color: #d57562; }
.tabs > .tell { gap: 9px; margin-left: -9px; }
.over { color: #bbb; margin: 0 -9px; }
.acts { display: flex; gap: 11px; margin-left: auto; font-size: 13px; }
.pill { height: 22px; border-radius: 5px; background: #fff; color: #1f1f1f; gap: 5px; padding: 0 7px; box-shadow: 0 0 1px rgba(0, 0, 0, .25); }
.green { background: #17743f; color: #fff; }

/* ribbon */
.ribbon { display: flex; flex: none; height: 86px; border-bottom: 1px solid #c3c3c3; font-weight: 500; }
.xl .ribbon { height: 69px; border-color: #d5d5d5; }
.sep { width: 1px; height: 77px; background: #c9c9c9; flex: none; }
.xl .sep { height: 61px; }
.group { display: flex; flex-direction: column; flex: none; }
.tools { display: flex; height: 70px; }
.mid { justify-content: center; }
.cap { text-align: center; line-height: 14px; font-size: 10px; }
.big { flex-direction: column; justify-content: flex-start; font-size: 10px; line-height: 12px; padding-top: 3px; height: 70px; }
.big > span { display: flex; align-items: center; gap: 5px; height: 32px; margin-bottom: 4px; }
.stack { display: grid; grid-template-rows: repeat(3, 22px); justify-items: start; font-size: 11px; font-weight: 400; }
.stack button { gap: 5px; }
.ppt .stack { color: #444; }
.duo { grid-template-rows: 34px 28px; }
.off, .off2 { opacity: .5; }
.two { display: grid; grid-template-rows: 22px 24px; row-gap: 8px; height: 70px; padding-top: 6px; }
.line, .sub { display: flex; align-items: center; }
.sub { gap: 10px; }
.dd { gap: 5px; min-width: 28px; font-size: 13px; font-weight: 400; }
.bar { width: 1px; height: 18px; background: #c9c9c9; }
.g-clip { width: 134px; }
.g-clip .tools { padding-left: 13px; gap: 6px; }
.g-slides { width: 146px; }
.g-slides .tools { padding-left: 11px; gap: 7px; }
.g-font { width: 333px; }
.g-font .two { padding-left: 10px; }
.pick { position: relative; display: flex; background: #fff; height: 22px; border-radius: 2px; margin-right: 4px; color: #1d1d1d; }
.pick select { appearance: none; width: 100%; padding-left: 5px; font-size: 12px; }
.pick svg { position: absolute; right: 3px; top: 9px; color: #555; }
.face { width: 166px; }
.pt { width: 51px; }
.glyph { font-size: 14px; font-weight: 400; width: 27px; }
.lg { font-size: 17px; }
.glyph svg { align-self: flex-start; }
.g-font .line > .bar { margin: 0 12px 0 6px; }
.sq { width: 25px; font-size: 13px; font-weight: 400; }
.serif { font-family: "Liberation Serif", serif; font-size: 15px; }
.small { font-size: 13px; }
.sq sup, .sq sub { font-size: 8px; line-height: 8px; color: #3f93d2; vertical-align: baseline; }
.sq sup { margin-bottom: 10px; }
.sq sub { margin-top: 10px; }
.g-font .sub { margin-left: 6px; }
.av > span { display: grid; font-size: 11px; line-height: 11px; justify-items: center; }
.ink { width: 16px; border-bottom: 3px solid #fff; line-height: 14px; }
.g-para { width: 318px; }
.g-para .tools { padding-left: 9px; gap: 9px; }
.wide { gap: 10px; padding-left: 4px; }
.wide .bar { margin: 0 1px; }
.aligns { display: flex; gap: 1px; }
.aligns button { width: 24px; height: 24px; border-radius: 3px; }
.aligns .on { background: #bfbfbf; box-shadow: inset 0 0 0 1px #b0b0b0; }
.g-para .sub { margin-left: 9px; }
.g-insert { width: 152px; }
.g-insert .tools { padding-left: 12px; gap: 8px; }
.g-draw { width: 226px; }
.g-draw .tools { padding-left: 12px; gap: 8px; }
.g-assist { width: 75px; }
.g-adobe { width: 93px; }

/* slide editor */
.work { display: flex; flex: 1; min-height: 0; }
.editor { flex: 1; min-width: 0; display: grid; grid-template: 16px 1fr 5px / 20px 1fr; background: #fcfcfc; }
.knob { margin-left: 4px; border: 1px solid #cfcfcf; border-top: 0; background: linear-gradient(135deg, #f8f8f8, #e4e4e4); }
.hruler { display: flex; border-bottom: 1px solid #c9c9c9; padding: 0 39px 0 45px; font: 10px/9px "Noto Sans", sans-serif; color: #7a7a7a; background: linear-gradient(#aaa, #aaa) 30px 0 / 1px 15px no-repeat, linear-gradient(#aaa, #aaa) calc(100% - 24px) 0 / 1px 15px no-repeat; }
.hruler span { flex: 1; text-align: center; background:
  linear-gradient(#999, #999) 0 100% / 1px 9px no-repeat, linear-gradient(#999, #999) 25% 100% / 1px 4px no-repeat,
  linear-gradient(#999, #999) 50% 100% / 1px 4px no-repeat, linear-gradient(#999, #999) 75% 100% / 1px 4px no-repeat; }
.vruler { display: flex; flex-direction: column; margin-left: 4px; padding: 260px 0 252px; border: 1px solid #c9c9c9; border-width: 0 1px; font: 10px/9px "Noto Sans", sans-serif; color: #7a7a7a; }
.vruler span { flex: 1; display: flex; align-items: center; background:
  linear-gradient(#999, #999) 100% 0 / 7px 1px no-repeat, linear-gradient(#999, #999) 100% 25% / 3px 1px no-repeat,
  linear-gradient(#999, #999) 100% 50% / 3px 1px no-repeat, linear-gradient(#999, #999) 100% 75% / 3px 1px no-repeat; }
.vruler em { font-style: normal; transform: rotate(-90deg); margin-left: 1px; }
.canvas { position: relative; overflow: hidden; background: #e8e8e8; border: solid #f2f2f2; border-width: 8px 0 0 8px; }
.spare { position: absolute; left: 821px; top: 162px; }
.slide { position: absolute; left: 23px; top: 251px; width: 1238px; height: 697px; background: #fff; box-shadow: 0 6px 24px rgba(0, 0, 0, .14); font-family: "Liberation Sans", Arial, sans-serif; }
.frame { position: absolute; inset: 33px 29px 66px 36px; border: 1px solid #a9a9a9; padding: 3px; }
.chart { height: 100%; border: 1px solid #cdcdcd; display: flex; flex-direction: column; padding: 10px 169px 24px 7px; color: #3f3f3f; }
.chart h2 { font-size: 24px; line-height: 28px; font-weight: 400; text-align: center; margin: 0 -169px 26px -7px; color: #4a4a4a; }
.plot { flex: 1; display: flex; flex-direction: column; justify-content: space-between; font-size: 16px; line-height: 18px; }
.item { display: grid; grid-template-columns: 88px 1fr 46px 62px; align-items: center; height: 43px; }
.item > svg { margin-left: 7px; }
.name { font-size: 15px; }
.track { height: 43px; }
.fillbar { height: 43px; background: #1c84fc; color: #fff; display: flex; align-items: center; justify-content: flex-end; padding-right: 7px; }
.delta { margin-left: 22px; width: 40px; height: 23px; line-height: 23px; text-align: center; white-space: nowrap; color: #333; }
.picked { position: relative; border: 1px solid #444; line-height: 21px; }
.picked i { position: absolute; width: 7px; height: 7px; border-radius: 50%; border: 1px solid #1c6fc0; background: #cfe6fb; }
.picked i:nth-child(1) { left: -4px; top: -4px; }
.picked i:nth-child(2) { right: -4px; top: -4px; }
.picked i:nth-child(3) { left: -4px; bottom: -4px; }
.picked i:nth-child(4) { right: -4px; bottom: -4px; }
.grip { position: absolute; width: 9px; height: 9px; border: 1px solid #8f8f8f; border-radius: 2px; background: #fff; }
.k1, .k4, .k6 { left: -3px; }
.k2, .k7 { left: calc(50% - 4px); }
.k3, .k5, .k8 { right: -3px; }
.k1, .k2, .k3 { top: -3px; }
.k4, .k5 { top: calc(50% - 4px); }
.k6, .k7, .k8 { bottom: -3px; }
.logo { position: absolute; left: 567px; bottom: 9px; display: grid; font-family: Lato, sans-serif; color: #6a7280; }
.logo span { font-size: 31px; line-height: 34px; }
.logo small { font-size: 11px; line-height: 12px; margin: -4px 0 0 61px; }
.logo i { position: absolute; left: 48px; top: -6px; width: 3px; height: 20px; background: #6a7280; }
.guide { position: absolute; }
.guide.v { left: 641px; top: 0; bottom: 0; width: 1px; background: repeating-linear-gradient(#9a9a9a 0 4px, transparent 4px 6px); }
.guide.h { left: 0; right: 0; top: 599px; height: 1px; background: repeating-linear-gradient(90deg, #9a9a9a 0 4px, transparent 4px 6px); }
.foot { grid-column: 1 / 3; margin-left: 4px; border: 1px solid #c4c4c4; border-width: 1px 0 0 1px; }

/* format pane */
.pane { width: 293px; flex: none; border-left: 1px solid #c2c2c2; background: #e8e8e8; color: #2e2e2e; font-size: 12px; line-height: 14px; }
.pane-h { display: flex; justify-content: space-between; padding: 5px 7px 0 17px; height: 41px; align-items: flex-start; }
.pane-h h3 { font-size: 14px; line-height: 17px; font-weight: 600; }
.pane-h button { margin-top: 1px; }
.seg { display: grid; grid-template-columns: 1fr 1fr; margin: 0 11px; height: 20px; border: 1px solid #dadada; border-radius: 4px; overflow: hidden; color: #a6a6a6; }
.seg .on { background: #dadada; }
.kinds { display: flex; height: 56px; align-items: flex-end; padding-left: 11px; border-bottom: 6px solid #f4f4f4; color: #444; box-shadow: inset 0 -1px #cfcfcf; }
.kinds button { width: 41px; height: 36px; }
.kinds .on { width: 39px; background: #f4f4f4; border: 1px solid #cfcfcf; border-bottom: 0; }
.sect { width: 100%; height: 26px; justify-content: flex-start; gap: 6px; padding-left: 9px; font-size: 12px; border: solid #c9c9c9; border-width: 1px 0; }
.open { background: linear-gradient(#dfdfdf, #d6d6d6); }
.shut { background: #f0f0f0; padding-left: 11px; height: 25px; margin-top: 11px; }
.form { padding: 14px 17px 0; }
h4 { font-size: 12px; line-height: 15px; font-weight: 700; color: #222; }
.form h4 { margin-bottom: 6px; }
.opt { display: grid; grid-template-columns: 1fr auto; align-items: center; height: 29px; }
.opt label, .rad { display: flex; align-items: center; gap: 6px; }
.opt input { appearance: none; width: 14px; height: 14px; border: 1px solid #c4c4c4; border-radius: 3px; background: #fff; }
.opt input:checked { display: grid; place-items: center; }
.opt input:checked::after { content: ""; width: 5px; height: 9px; border: solid #1d1d1d; border-width: 0 2px 2px 0; transform: rotate(40deg); margin-top: -2px; }
.btn { background: #fff; border-radius: 5px; height: 20px; box-shadow: 0 1px 1px rgba(0, 0, 0, .25); color: #222; }
.range { width: 104px; }
.reset { width: 112px; margin: 10px 0 11px; }
.sepr { display: flex; justify-content: space-between; align-items: center; padding-right: 2px; height: 22px; margin-top: 4px; }
.combo { position: relative; width: 105px; height: 23px; background: #fff; border: 1px solid #cdcdcd; border-radius: 2px; display: flex; color: #222; }
.combo select { appearance: none; width: 100%; padding-left: 4px; }
.combo svg { position: absolute; right: 3px; top: 8px; color: #999; }
.form .pos { margin-bottom: 8px; }
.rad { height: 19px; margin-left: -1px; }
.rad input { appearance: none; width: 14px; height: 14px; border-radius: 50%; border: 1px solid #c4c4c4; background: #fff; }
.rad input:checked { background: radial-gradient(#222 3px, #fff 4px); }

/* status bars */
.status { height: 23px; flex: none; display: flex; align-items: center; border-top: 1px solid #a3a3a3; background: linear-gradient(#dfdfdf, #d2d2d2); color: #4c4c4c; font-size: 12px; }
.s1 { margin-left: 23px; }
.s2 { margin-left: 20px; }
.s3 { margin-left: 18px; gap: 3px; }
.end { margin-left: auto; display: flex; align-items: center; height: 100%; }
.nt, .cm { gap: 3px; }
.cm { margin: 0 9px 0 17px; }
.view { width: 35px; height: 100%; }
.view.on { background: #9c9c9c; width: 37px; }
.zb { width: 15px; }
.view + .zb { margin-left: 4px; }
.status input { appearance: none; width: 98px; height: 16px; margin: 0 4px; background: linear-gradient(#979797, #979797) center / 100% 4px no-repeat; }
.status input::-webkit-slider-thumb { appearance: none; width: 16px; height: 16px; border-radius: 50%; background: #fff; box-shadow: 0 0 2px rgba(0, 0, 0, .5); }
.pc { width: 50px; text-align: center; }
.fit { width: 48px; padding-right: 8px; }

/* spreadsheet */
.xl .auto { color: #555; }
.xl .dark { margin-left: 1px; }
.x-paste { width: 102px; }
.x-paste .tools { padding-left: 14px; gap: 7px; }
.x-font { width: 67px; }
.x-align { width: 73px; }
.x-num { width: 66px; }
.x-styles { width: 172px; padding-left: 13px; }
.x-cells { width: 67px; }
.x-edit { width: 66px; }
.x-data { width: 62px; }
.x-pdf { width: 62px; opacity: .5; }
.fbar { display: flex; align-items: center; height: 29px; flex: none; padding-bottom: 2px; background: #fff; border: solid #a9a9a9; border-width: 1px 0; font: 13px/16px Lato, sans-serif; color: #222; box-shadow: inset 0 -2px #f3f3f3, inset 0 -3px #a9a9a9; }
.namebox { position: relative; width: 84px; height: 25px; border-right: 2px solid #ababab; padding-left: 10px; display: flex; align-items: center; }
.namebox input { width: 60px; }
.namebox svg { position: absolute; right: 6px; top: 5px; }
.fx1 { color: #c4c4c4; margin-left: 14px; }
.fx1 + .fx1 { margin-left: 16px; }
.fx { font: italic 16px/18px "Liberation Serif", serif; color: #444; margin-left: 17px; padding-right: 8px; border-right: 1px solid #ddd; }
.formula { flex: 1; padding-left: 7px; }
.exp { color: #666; margin-right: 4px; }
.sheet { flex: 1; min-height: 0; overflow: hidden; background: #fff; }
table { table-layout: fixed; border-collapse: separate; border-spacing: 0; width: 911px; height: 1193px; font: 11px/13px Lato, sans-serif; color: #000; }
.c0 { width: 22px; }
th, td { padding: 0; border: solid #d0d0d0; border-width: 0 1px 1px 0; height: 15px; vertical-align: bottom; }
td div { height: 13px; overflow: hidden; white-space: nowrap; padding: 0 2px; }
thead th { height: 21px; font-size: 12px; line-height: 16px; font-weight: 400; color: #666; background: linear-gradient(#f6f6f6, #fff); border-bottom-color: #b5b5b5; }
thead th svg { margin: 2px 0 2px 5px; }
tbody th { font-size: 11px; font-weight: 400; color: #555; background: #fafafa; border-right-color: #b5b5b5; }
thead .sel { background: #ececec; color: #17743f; border-bottom: 2px solid #17743f; }
tbody .sel { background: #ececec; color: #17743f; border-right: 2px solid #17743f; }
.num { text-align: right; }
.na { text-align: center; }
.eEdge, .kEdge { border-right: 1px solid #1a12d8; }
.bEdge { border-bottom: 1px solid #1a12d8; }
.active { outline: 2px solid #17743f; outline-offset: -1px; position: relative; }
.active::after { content: ""; position: absolute; right: -3px; bottom: -3px; width: 5px; height: 5px; background: #17743f; border: solid #fff; border-width: 1px 0 0 1px; box-sizing: content-box; }
.sheets { display: flex; height: 25px; flex: none; background: #ededed; border-top: 1px solid #c6c6c6; }
.ar { color: #a6a6a6; width: 22px; }
.ar:first-child { margin-left: 7px; }
.tab { width: 77px; height: 23px; margin: -1px 0 0 8px; background: #fff; color: #17743f; font-size: 12px; font-weight: 600; border: solid #b8b8b8; border-width: 0 1px 2px; }
.add { width: 38px; border-right: 1px solid #c2c2c2; color: #444; height: 22px; }
.r1 { margin-left: 24px; }
.r2 { margin-left: 19px; }
.xl .s3 { margin-left: 16px; }
.xl .view { width: 34px; }
.xl .view.on { width: 36px; }
.xl .pc { width: 52px; margin-right: 12px; }
</style>
